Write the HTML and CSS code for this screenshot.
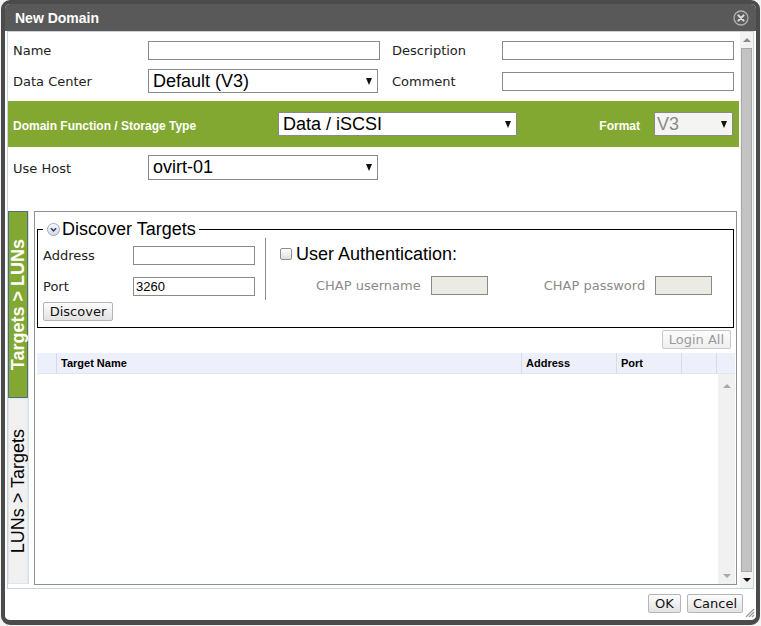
FILE: index.html
```html
<!DOCTYPE html>
<html>
<head>
<meta charset="utf-8">
<link rel="stylesheet" href="styles.css">
</head>
<body>
<div class="dialog">
  <div class="titlebar">
    <span class="title">New Domain</span>
    <svg class="close" width="16" height="16" viewBox="0 0 16 16">
      <circle cx="8" cy="8" r="7" fill="#5e5e5e" stroke="#b0b0b0" stroke-width="1.3"/>
      <path d="M5.4 5.4 L10.6 10.6 M10.6 5.4 L5.4 10.6" stroke="#e0e0e0" stroke-width="2" stroke-linecap="round"/>
    </svg>
  </div>
  <div class="panel">
    <div class="content">
      <div class="form-grid">
        <label class="lbl">Name</label><input class="txt" type="text">
        <span></span>
        <label class="lbl">Description</label><input class="txt" type="text">
        <label class="lbl">Data Center</label><div class="select sel-dc"><span>Default (V3)</span><span class="arrow"></span></div>
        <span></span>
        <label class="lbl">Comment</label><input class="txt" type="text">
      </div>
      <div class="band">
        <span class="band-label">Domain Function / Storage Type</span>
        <div class="select sel-type"><span>Data / iSCSI</span><span class="arrow"></span></div>
        <span class="band-spacer"></span>
        <span class="band-label fmt">Format</span>
        <div class="select sel-fmt"><span>V3</span><span class="arrow"></span></div>
      </div>
      <div class="host-row">
        <label class="lbl host-lbl">Use Host</label>
        <div class="select sel-host"><span>ovirt-01</span><span class="arrow"></span></div>
      </div>
      <div class="tabs-area">
        <div class="vtabs">
          <div class="vtab active"><span>Targets &gt; LUNs</span></div>
          <div class="vtab"><span>LUNs &gt; Targets</span></div>
        </div>
        <div class="tab-panel">
          <fieldset class="discover">
            <legend>
              <svg class="chev" width="13" height="13" viewBox="0 0 13 13">
                <defs>
                  <linearGradient id="g" x1="0" y1="0" x2="0" y2="1">
                    <stop offset="0" stop-color="#fbfbfd"/>
                    <stop offset="1" stop-color="#d3d8e3"/>
                  </linearGradient>
                </defs>
                <circle cx="6.5" cy="6.5" r="6" fill="url(#g)" stroke="#a0a8b8"/>
                <path d="M3.9 5.3 L6.5 7.9 L9.1 5.3" stroke="#30446c" stroke-width="1.6" fill="none"/>
              </svg>Discover Targets
            </legend>
            <div class="disc">
              <div class="disc-left">
                <div class="disc-grid">
                  <label class="lbl">Address</label><input class="txt w122" type="text">
                  <label class="lbl">Port</label><input class="txt w122" type="text" value="3260">
                </div>
                <button class="btn btn-disc">Discover</button>
              </div>
              <div class="disc-right">
                <div class="auth"><span class="chk"></span>User Authentication:</div>
                <div class="chap">
                  <span>CHAP username</span><input class="txt chap-in" type="text" disabled>
                  <span class="pw">CHAP password</span><input class="txt chap-in" type="text" disabled>
                </div>
              </div>
            </div>
          </fieldset>
          <div class="login-row"><button class="btn btn-login" disabled>Login All</button></div>
          <div class="table">
            <div class="thead">
              <div class="th c0"></div>
              <div class="th c1">Target Name</div>
              <div class="th c2">Address</div>
              <div class="th c3">Port</div>
              <div class="th c4"></div>
              <div class="th c5"></div>
            </div>
            <div class="tbody">
              <div class="rows"></div>
              <div class="mini-scroll">
                <span class="up-arrow light"></span>
                <span class="down-arrow light"></span>
              </div>
            </div>
          </div>
        </div>
      </div>
    </div>
    <div class="vscroll">
      <div class="vs-end"><span class="up-arrow"></span></div>
      <div class="thumb"></div>
      <div class="vs-end"><span class="down-arrow"></span></div>
    </div>
  </div>
  <div class="footer">
    <button class="btn btn-ok">OK</button>
    <button class="btn btn-cancel">Cancel</button>
    <svg class="grip" width="11" height="12" viewBox="0 0 11 12">
      <path d="M10 3 L2 11 M10 6 L5 11 M10 9 L8 11" stroke="#9a9a9a" stroke-width="1.2"/>
    </svg>
  </div>
</div>
</body>
</html>
```

FILE: styles.css
```css
body {
  margin: 0;
  background: #f3f3f3;
  font-family: "DejaVu Sans", Verdana, sans-serif;
  font-size: 13px;
  color: #222;
}

.dialog {
  box-sizing: border-box;
  width: 759px;
  height: 625px;
  margin-left: 1px;
  border: 4px solid #4b4b4b;
  border-bottom-width: 5px;
  border-radius: 9px;
  background: #fff;
  display: flex;
  flex-direction: column;
  overflow: hidden;
}

.titlebar {
  flex: none;
  height: 27px;
  background: #595959;
  display: flex;
  align-items: center;
  justify-content: space-between;
  padding: 0 7px 0 10px;
}

.title {
  font: bold 14px "Liberation Sans", Arial, sans-serif;
  color: #fff;
}

.close { display: block; }

.panel {
  flex: none;
  box-sizing: border-box;
  height: 558px;
  margin: 0 2px;
  border: 1px solid #c9d3db;
  display: flex;
}

.content {
  width: 731px;
  margin-right: 1px;
}

/* form grid */
.form-grid {
  display: grid;
  grid-template-columns: 135px 232px 12px 110px 232px;
  grid-template-rows: 31px 30px;
  align-items: center;
  padding: 3px 0 0 5px;
}

.lbl {
  font-family: "DejaVu Sans", Verdana, sans-serif;
  font-size: 13px;
  color: #222;
}

.txt {
  box-sizing: border-box;
  width: 232px;
  height: 19px;
  margin: 0;
  padding: 0 2px;
  border: 1px solid #8a8a8a;
  background: #fff;
  font: 13px "Liberation Sans", Arial, sans-serif;
  color: #000;
  outline: none;
}

.select {
  box-sizing: border-box;
  height: 24px;
  border: 1px solid #8a8a8a;
  background: #fff;
  display: flex;
  align-items: center;
  justify-content: space-between;
  padding: 0 5px 0 4px;
  font: 18px "Liberation Sans", Arial, sans-serif;
  color: #000;
}

.arrow {
  width: 0;
  height: 0;
  border-left: 3.5px solid transparent;
  border-right: 3.5px solid transparent;
  border-top: 7px solid #111;
}

.sel-dc { width: 230px; }

/* green band */
.band {
  margin-top: 5px;
  height: 46px;
  background: #83a832;
  display: flex;
  align-items: center;
  padding: 0 6px 0 5px;
}

.band-label {
  width: 265px;
  font: bold 12px "Liberation Sans", Arial, sans-serif;
  color: #fff;
  margin-top: 3px;
}

.band-label.fmt {
  width: auto;
  margin-right: 14px;
}

.sel-type { width: 239px; }

.band-spacer { flex: 1; }

.sel-fmt {
  width: 79px;
  background: #f4f4f2;
  color: #8a8a8a;
  padding-left: 2px;
}

/* host */
.host-row {
  display: flex;
  align-items: center;
  padding: 8px 0 0 5px;
}

.host-lbl { width: 135px; margin-top: 1px; }

.sel-host {
  width: 230px;
  height: 25px;
}

/* tabs */
.tabs-area {
  display: flex;
  margin-top: 31px;
  height: 374px;
}

.vtabs {
  box-sizing: border-box;
  width: 21px;
  height: 373px;
  border-right: 1px solid #d7e1e8;
  display: flex;
  flex-direction: column;
}

.vtab {
  box-sizing: border-box;
  height: 186px;
  background: #f1f1f1;
  border: 1px solid #e0e6ea;
  display: flex;
  align-items: center;
  justify-content: center;
}

.vtab.active {
  height: 187px;
  background: #83a832;
  border-color: #4f6f80;
}

.vtab span {
  writing-mode: vertical-rl;
  transform: rotate(180deg);
  white-space: nowrap;
  font: 18px "Liberation Sans", Arial, sans-serif;
  color: #000;
}

.vtab.active span {
  font-weight: bold;
  color: #fff;
}

.tab-panel {
  box-sizing: border-box;
  margin-left: 5px;
  width: 703px;
  height: 374px;
  border: 1px solid #8f8f8f;
  display: flex;
  flex-direction: column;
}

/* fieldset */
.discover {
  margin: 7px 2px 0;
  padding: 0 5px 6px;
  border: 1px solid #000;
  min-width: 0;
}

.discover legend {
  padding: 0 3px 0 4px;
  font: 18px/21px "Liberation Sans", Arial, sans-serif;
  color: #000;
}

.chev {
  vertical-align: -1px;
  margin-right: 2px;
}

.disc {
  display: flex;
  align-items: flex-start;
}

.disc-left { width: 222px; }

.disc-grid {
  display: grid;
  grid-template-columns: 90px 122px;
  grid-template-rows: 31px 30px;
  align-items: center;
}

.w122 { width: 122px; }

.btn {
  box-sizing: border-box;
  height: 19px;
  margin: 0;
  padding: 0 5px;
  border: 1px solid #b5b5b5;
  border-radius: 2px;
  background: linear-gradient(#fdfdfd, #e2e2e2);
  font: 13px/17px "DejaVu Sans", Verdana, sans-serif;
  color: #111;
  white-space: nowrap;
}

.btn-disc {
  margin-top: 1px;
  width: 70px;
}

.disc-right {
  box-sizing: border-box;
  height: 62px;
  margin-top: -2px;
  border-left: 1px solid #8a8a8a;
  padding-left: 14px;
}

.auth {
  height: 32px;
  display: flex;
  align-items: center;
  font: 18px "Liberation Sans", Arial, sans-serif;
  color: #000;
}

.chk {
  box-sizing: border-box;
  width: 12px;
  height: 12px;
  border: 1px solid #8e8e8e;
  border-radius: 2px;
  background: linear-gradient(#fff, #e0e0e0);
  margin-right: 4px;
}

.chap {
  height: 30px;
  display: flex;
  align-items: center;
  padding-left: 36px;
  color: #8a8a8a;
}

.chap-in {
  width: 57px;
  margin-left: 10px;
  background: #ebebe4;
}

.pw { margin-left: 56px; }

.login-row {
  display: flex;
  justify-content: flex-end;
  padding-right: 5px;
  margin-top: 2px;
}

.btn-login {
  width: auto;
  padding: 0 6px;
  color: #9a9a9a;
  border-color: #c9c9c9;
  background: linear-gradient(#fdfdfd, #eeeeee);
}

/* table */
.table {
  flex: 1;
  margin: 4px 1px 0 2px;
  display: flex;
  flex-direction: column;
}

.thead {
  box-sizing: border-box;
  height: 21px;
  display: flex;
  background: #edf0fb;
  border-bottom: 1px solid #dfe4f0;
}

.th {
  box-sizing: border-box;
  border-right: 1px solid #d5dbe9;
  padding-left: 4px;
  display: flex;
  align-items: center;
  font: bold 11px "Liberation Sans", Arial, sans-serif;
  color: #000;
}

.c0 { width: 20px; }
.c1 { width: 465px; }
.c2 { width: 95px; }
.c3 { width: 65px; }
.c4 { width: 35px; }
.c5 { width: 18px; border-right: none; }

.tbody {
  flex: 1;
  display: flex;
}

.rows { flex: 1; }

.mini-scroll {
  width: 17px;
  background: #f1f1f1;
  display: flex;
  flex-direction: column;
  align-items: center;
  justify-content: space-between;
  padding: 10px 0 6px;
}

.up-arrow {
  width: 0;
  height: 0;
  border-left: 4px solid transparent;
  border-right: 4px solid transparent;
  border-bottom: 4px solid #8c8c8c;
}

.down-arrow {
  width: 0;
  height: 0;
  border-left: 4px solid transparent;
  border-right: 4px solid transparent;
  border-top: 4px solid #111;
}

.up-arrow.light { border-bottom-color: #a9a9a9; }
.down-arrow.light { border-top-color: #a9a9a9; }

/* main scrollbar */
.vscroll {
  width: 13px;
  background: #f2f2f2;
  display: flex;
  flex-direction: column;
  align-items: center;
}

.vs-end {
  height: 16px;
  flex: none;
  display: flex;
  align-items: center;
  justify-content: center;
}

.thumb {
  flex: 1;
  box-sizing: border-box;
  width: 11px;
  background: #c3c3c3;
  border: 1px solid #a8a8a8;
}

/* footer */
.footer {
  flex: 1;
  display: flex;
  justify-content: flex-end;
  align-items: flex-start;
  padding-top: 5px;
}

.btn-ok {
  width: 33px;
  margin-right: 6px;
}

.btn-cancel { width: 56px; }

.grip {
  align-self: flex-end;
  margin: 0 1px 2px 1px;
}
```
